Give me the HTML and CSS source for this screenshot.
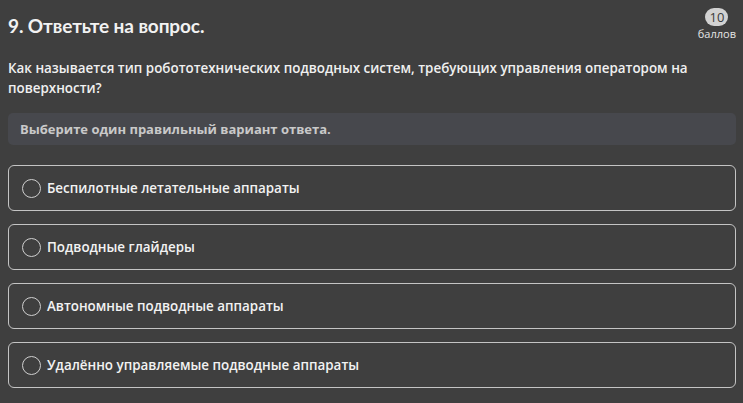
FILE: index.html
```html
<!DOCTYPE html>
<html lang="ru">
<head>
<meta charset="utf-8">
<link rel="stylesheet" href="styles.css">
</head>
<body>
<div class="page">
  <div class="head">
    <h1 class="title">9. Ответьте на вопрос.</h1>
    <div class="score">
      <span class="pill">10</span>
      <span class="unit">баллов</span>
    </div>
  </div>
  <p class="question">Как называется тип робототехнических подводных систем, требующих управления оператором на поверхности?</p>
  <div class="hint">Выберите один правильный вариант ответа.</div>
  <div class="options">
    <label class="option"><span class="radio"></span><span class="label">Беспилотные летательные аппараты</span></label>
    <label class="option"><span class="radio"></span><span class="label">Подводные глайдеры</span></label>
    <label class="option"><span class="radio"></span><span class="label">Автономные подводные аппараты</span></label>
    <label class="option"><span class="radio"></span><span class="label">Удалённо управляемые подводные аппараты</span></label>
  </div>
</div>
</body>
</html>
```
FILE: styles.css
```css
html, body {
  margin: 0;
  padding: 0;
  background: #3f3f3f;
}
body {
  font-family: "Open Sans", "Noto Sans", sans-serif;
  color: #eeeeee;
}
.page {
  padding: 8px 7px 0 8px;
}
.head {
  display: flex;
  justify-content: space-between;
  align-items: flex-start;
}
.title {
  margin: 6px 0 0 0;
  font-family: "Lato", "Open Sans", sans-serif;
  font-weight: 700;
  font-size: 19px;
  line-height: 24px;
  color: #f2f2f2;
  letter-spacing: -0.1px;
}
.score {
  display: flex;
  flex-direction: column;
  align-items: center;
}
.pill {
  background: #d2d2d2;
  color: #3a3a3a;
  font-size: 13px;
  line-height: 18px;
  min-width: 14px;
  padding: 0 4px;
  border-radius: 9px;
  text-align: center;
}
.unit {
  font-size: 11px;
  line-height: 14px;
  color: #e6e6e6;
  margin-top: 1px;
}
.question {
  margin: 17px 0 0 0;
  font-size: 13.4px;
  font-weight: 600;
  line-height: 20px;
  color: #f0f0f0;
  padding-right: 30px;
}
.hint {
  margin-top: 15px;
  background: #47484d;
  border-radius: 5px;
  padding: 0 12px;
  height: 32px;
  line-height: 32px;
  font-size: 13px;
  font-weight: 700;
  color: #c9c9c9;
}
.options {
  display: flex;
  flex-direction: column;
  gap: 13px;
  margin-top: 20px;
}
.option {
  display: flex;
  align-items: center;
  height: 44px;
  border: 1px solid #c4c4c4;
  border-radius: 6px;
  padding: 0 13px;
}
.radio {
  width: 17px;
  height: 17px;
  border: 1.5px solid #cfcfcf;
  border-radius: 50%;
  flex: none;
}
.label {
  margin-left: 6px;
  font-size: 13.4px;
  font-weight: 600;
  color: #f2f2f2;
}
```
